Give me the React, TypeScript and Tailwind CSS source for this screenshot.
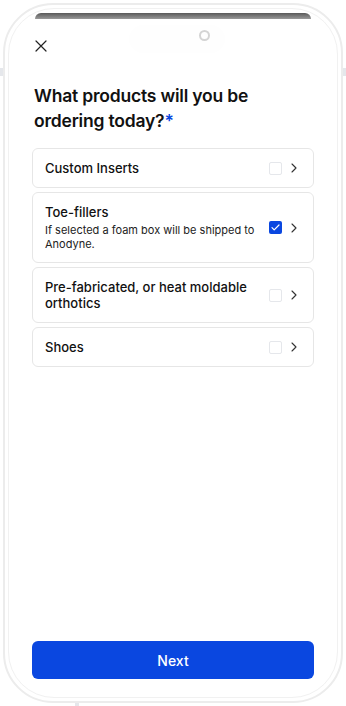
import React, { useState } from 'react';

const items = [
  { title: 'Custom Inserts', note: '' },
  { title: 'Toe-fillers', note: 'If selected a foam box will be shipped to Anodyne.' },
  { title: 'Pre-fabricated, or heat moldable orthotics', note: '' },
  { title: 'Shoes', note: '' },
];

function Chevron() {
  return (
    <svg width="8" height="10" viewBox="0 0 8 10" fill="none" className="shrink-0">
      <path d="M2 1l4 4-4 4" stroke="#333" strokeWidth="1.1" strokeLinecap="round" strokeLinejoin="round" />
    </svg>
  );
}

function Check({ on }: { on: boolean }) {
  if (!on) return <div className="w-[13px] h-[13px] rounded-[2px] border border-gray-200 bg-white shrink-0" />;
  return (
    <div className="w-[13px] h-[13px] rounded-[2px] bg-[#0a47e0] flex items-center justify-center shrink-0">
      <svg width="9" height="7" viewBox="0 0 9 7" fill="none">
        <path d="M1 3.6l2.2 2.2L8 1" stroke="#fff" strokeWidth="1.2" strokeLinecap="round" strokeLinejoin="round" />
      </svg>
    </div>
  );
}

export default function App() {
  const [selected, setSelected] = useState<number[]>([1]);

  const toggle = (i: number) =>
    setSelected((s) => (s.includes(i) ? s.filter((x) => x !== i) : [...s, i]));

  return (
    <div className="w-[346px] h-[706px] bg-white relative font-['Inter',sans-serif] text-[#111]">
      {/* side buttons */}
      <div className="absolute left-0 top-[68px] w-[3px] h-[8px] bg-gray-200" />
      <div className="absolute right-0 top-[68px] w-[3px] h-[8px] bg-gray-200" />
      <div className="absolute left-[75px] bottom-0 w-[4px] h-[3px] bg-gray-200" />

      {/* phone frame */}
      <div className="absolute left-[3px] top-[3px] w-[340px] h-[700px] rounded-[50px] border-2 border-[#ececec] p-[3px]">
        <div className="w-full h-full rounded-[46px] border border-[#f1f1f1] flex flex-col overflow-hidden">
          <div className="mx-[26px] mt-[4px] h-[6px] rounded-t-[14px] bg-gradient-to-b from-[#5a5a5a] to-[#9a9a9a]" />

          <div className="relative px-[26px] pt-[21px]">
            <div className="absolute left-[120px] top-[6px] w-[96px] h-[28px] rounded-full bg-[#fefefe]" />
            <div className="absolute left-[190px] top-[11px] w-[11px] h-[11px] rounded-full border-2 border-[#d4d4d4]" />
            <svg width="12" height="12" viewBox="0 0 12 12" fill="none" className="relative">
              <path d="M1 1l10 10M11 1L1 11" stroke="#222" strokeWidth="1.2" strokeLinecap="round" />
            </svg>
          </div>

          <h1 className="px-[25px] mt-[31px] text-[17.5px] leading-[25px] font-semibold tracking-[-0.2px]">
            What products will you be ordering today?<span className="text-[#0a47e0]">*</span>
          </h1>

          <div className="px-[23px] mt-[15px] flex flex-col gap-[4px]">
            {items.map((it, i) => (
              <button
                key={it.title}
                onClick={() => toggle(i)}
                className="w-full text-left rounded-[6px] border border-[#e6e6e6] pl-[12px] pr-[15px] py-[11px] flex items-center gap-[8px]"
              >
                <div className="flex-1 min-w-0">
                  <div className="text-[13px] leading-[16px] font-medium">{it.title}</div>
                  {it.note && (
                    <div className="mt-[3px] text-[11px] leading-[14px] text-[#222]">{it.note}</div>
                  )}
                </div>
                <Check on={selected.includes(i)} />
                <Chevron />
              </button>
            ))}
          </div>

          <div className="flex-1" />

          <div className="px-[23px] pb-[18px]">
            <button className="w-full h-[38px] rounded-[6px] bg-[#0a47e0] text-white text-[14px] font-medium">
              Next
            </button>
          </div>
        </div>
      </div>
    </div>
  );
}
